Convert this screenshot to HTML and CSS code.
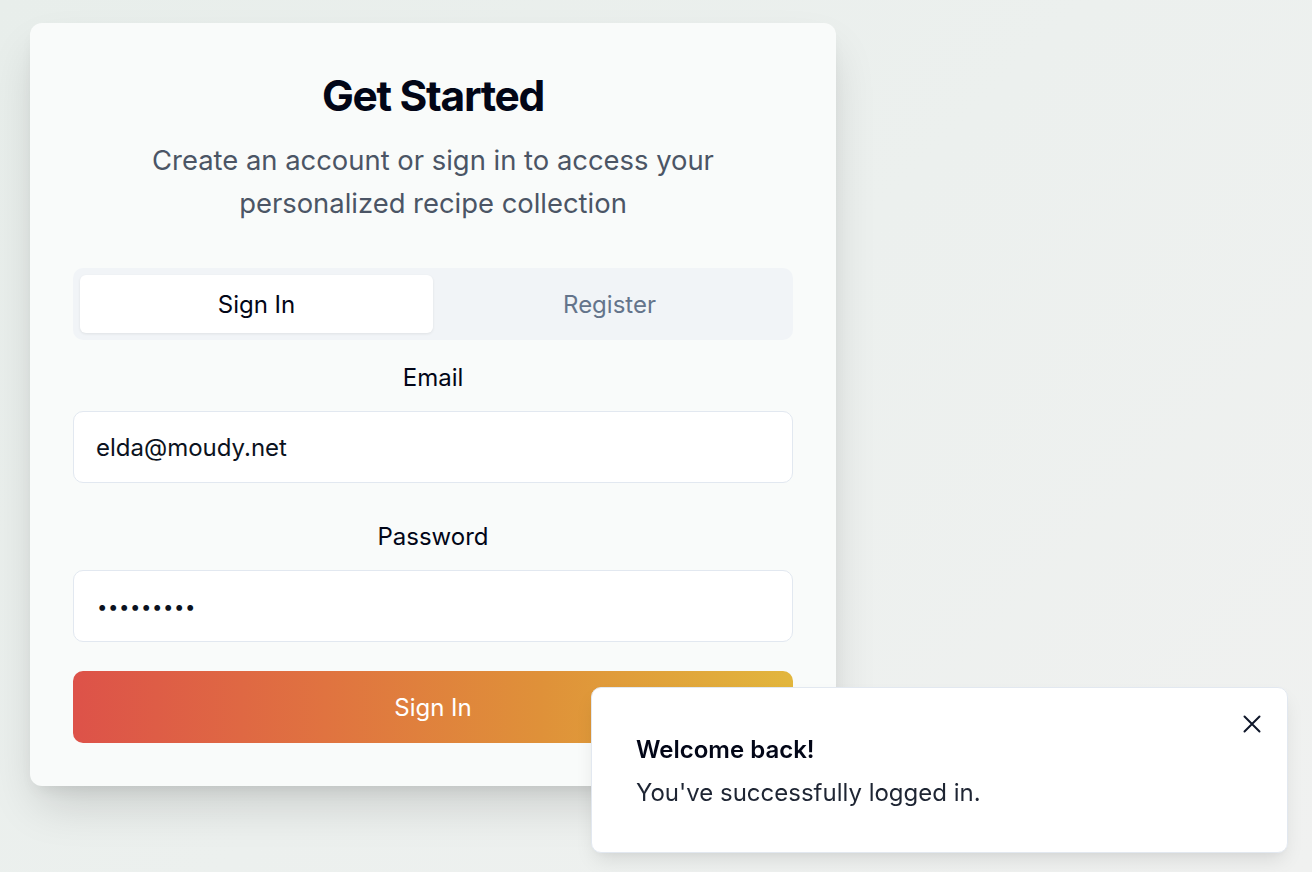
FILE: index.html
```html
<!DOCTYPE html>
<html lang="en">
<head>
<meta charset="utf-8">
<title>Get Started</title>
<link rel="stylesheet" href="styles.css">
</head>
<body>
<main class="page">
  <section class="card">
    <header class="card-header">
      <h1 class="title">Get Started</h1>
      <p class="subtitle">Create an account or sign in to access your personalized recipe collection</p>
    </header>
    <div class="tabs">
      <button class="tab tab-active">Sign In</button>
      <button class="tab">Register</button>
    </div>
    <form class="form">
      <div class="field field-email">
        <label class="label">Email</label>
        <div class="input">elda@moudy.net</div>
      </div>
      <div class="field field-password">
        <label class="label">Password</label>
        <div class="input input-password">•••••••••</div>
      </div>
      <button type="button" class="submit">Sign In</button>
    </form>
  </section>
</main>
<div class="toast">
  <div class="toast-body">
    <div class="toast-title">Welcome back!</div>
    <div class="toast-desc">You've successfully logged in.</div>
  </div>
  <button class="toast-close" aria-label="Close">
    <svg width="18" height="18" viewBox="0 0 18 18" fill="none" stroke="#0f172a" stroke-width="2" stroke-linecap="round"><path d="M1.5 1.5 16.5 16.5M16.5 1.5 1.5 16.5"/></svg>
  </button>
</div>
</body>
</html>
```
FILE: styles.css
```css
* { box-sizing: border-box; }
html, body { margin: 0; height: 100%; }
body {
  font-family: Inter, "Noto Sans", sans-serif;
  background: linear-gradient(135deg, #e8eeeb 0%, #ecf0ee 50%, #f0f1f0 100%);
  color: #0b1220;
  overflow: hidden;
}
.page {
  padding: 23px 30px;
}
.card {
  width: 806px;
  background: #f9fbfa;
  border-radius: 12px;
  padding: 42px 43px 43px;
  box-shadow: 0 24px 48px -8px rgba(0,0,0,0.16), 0 8px 16px -6px rgba(0,0,0,0.08);
}
.card-header {
  text-align: center;
}
.title {
  margin: 0;
  font-size: 42.5px;
  line-height: 62px;
  font-weight: 700;
  letter-spacing: -1.3px;
  color: #020617;
}
.subtitle {
  margin: 12px auto 0;
  font-size: 27.4px;
  line-height: 43px;
  color: #4b5565;
  max-width: 600px;
}
.tabs {
  margin-top: 43px;
  height: 72px;
  background: #f1f4f7;
  border-radius: 10px;
  padding: 7px;
  display: grid;
  grid-template-columns: 1fr 1fr;
}
.tab {
  border: 0;
  background: transparent;
  font-family: inherit;
  font-size: 24px;
  font-weight: 400;
  color: #64748b;
  border-radius: 6px;
  padding: 0;
}
.tab-active {
  background: #ffffff;
  color: #020617;
  box-shadow: 0 1px 3px rgba(0,0,0,0.08);
}
.form {
  display: flex;
  flex-direction: column;
}
.field {
  display: flex;
  flex-direction: column;
  align-items: center;
}
.field-email { margin-top: 20px; }
.field-password { margin-top: 36px; }
.label {
  font-size: 24px;
  line-height: 36px;
  font-weight: 400;
  color: #020617;
  margin-bottom: 15px;
}
.input {
  width: 100%;
  height: 72px;
  background: #ffffff;
  border: 1px solid #e2e8f0;
  border-radius: 10px;
  padding: 0 22px;
  display: flex;
  align-items: center;
  font-size: 24px;
  color: #0b1220;
}
.input-password {
  letter-spacing: 0.6px;
  font-size: 18.5px;
  padding-left: 23px;
}
.submit {
  margin-top: 29px;
  height: 72px;
  border: 0;
  border-radius: 10px;
  background: linear-gradient(90deg, #dd5249 0%, #e07340 35%, #df9139 65%, #e2b63d 100%);
  color: #ffffff;
  font-family: inherit;
  font-size: 24px;
  font-weight: 400;
}
.toast {
  position: fixed;
  right: 24px;
  bottom: 19px;
  width: 697px;
  height: 166px;
  background: #ffffff;
  border: 1px solid #e2e8f0;
  border-radius: 10px;
  box-shadow: 0 10px 20px -4px rgba(0,0,0,0.1), 0 4px 8px -4px rgba(0,0,0,0.06);
  padding: 2px 44px 0;
  display: flex;
  align-items: center;
}
.toast-body {
  display: flex;
  flex-direction: column;
  gap: 7px;
}
.toast-title {
  font-size: 24px;
  line-height: 36px;
  font-weight: 600;
  color: #020617;
}
.toast-desc {
  font-size: 24px;
  line-height: 36px;
  color: #1e2533;
}
.toast-close {
  position: absolute;
  top: 27px;
  right: 26px;
  border: 0;
  background: transparent;
  padding: 0;
  width: 18px;
  height: 18px;
  display: flex;
}
```
